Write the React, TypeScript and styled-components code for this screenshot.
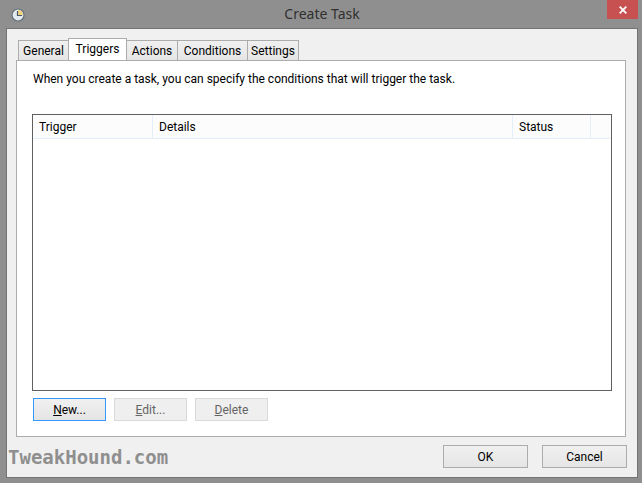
import React, { useState } from "react";
import styled, { createGlobalStyle, css } from "styled-components";

const GlobalStyle = createGlobalStyle`
  * { box-sizing: border-box; }
  body {
    margin: 0;
    background: #8f8f8f;
    color: #000;
    font: 12px/16px Roboto, "Noto Sans", sans-serif;
  }
  button { font: inherit; color: inherit; padding: 0; margin: 0; }
`;

const Frame = styled.div`
  display: flex;
  flex-direction: column;
  min-height: 100vh;
  padding: 0 4px 5px 6px;
  background: #8f8f8f;
`;

const TitleBar = styled.header`
  display: grid;
  grid-template-columns: 31px 1fr 31px;
  align-items: start;
  height: 28px;
`;

const AppIcon = styled.svg`
  width: 14px;
  height: 14px;
  margin: 8px 0 0 5px;
`;

const Title = styled.h1`
  margin: 4px 0 0;
  color: #303030;
  font-family: "Noto Sans", sans-serif;
  font-size: 14px;
  line-height: 20px;
  font-weight: 400;
  text-align: center;
`;

const CloseButton = styled.button`
  display: flex;
  align-items: center;
  justify-content: center;
  height: 19px;
  border: 0;
  background: #c75050;
`;

const Client = styled.main`
  flex: 1;
  display: flex;
  flex-direction: column;
  padding: 9px 11px 8px 9px;
  border: 1px solid #737373;
  background: #f0f0f0;
`;

const TabList = styled.div`
  display: flex;
  align-items: flex-end;
  padding-left: 2px;
  height: 23px;
  margin-bottom: -1px;
`;

const Tab = styled.button<{ $active: boolean; $width: number }>`
  width: ${(p) => p.$width}px;
  height: 21px;
  margin-right: -1px;
  border: 1px solid #acacac;
  background: linear-gradient(#f0f0f0, #e5e5e5);
  white-space: nowrap;
  ${(p) =>
    p.$active &&
    css`
      height: 23px;
      padding-bottom: 2px;
      border-bottom-color: #fff;
      background: #fff;
    `}
`;

const Panel = styled.section`
  flex: 1;
  display: flex;
  flex-direction: column;
  padding: 10px 13px 15px 15px;
  border: 1px solid #acacac;
  background: #fff;
`;

const Hint = styled.p`
  margin: 0 0 27px 1px;
`;

const ListBox = styled.div`
  flex: 1;
  border: 1px solid #606060;
`;

const ListTable = styled.table`
  width: 100%;
  table-layout: fixed;
  border-collapse: separate;
  border-spacing: 0;
`;

const HeaderCell = styled.th<{ $width?: number }>`
  width: ${(p) => (p.$width ? `${p.$width}px` : "auto")};
  height: 24px;
  padding: 0 6px;
  border-right: 1px solid #e5eef8;
  border-bottom: 1px solid #e5eef8;
  background: #fcfcfc;
  font-weight: 400;
  text-align: left;
  &:last-child { border-right: 0; }
`;

const ListActions = styled.div`
  display: flex;
  gap: 8px;
  margin: 7px 0 0 1px;
`;

const PushButton = styled.button<{ $focused?: boolean; $wide?: boolean }>`
  width: ${(p) => (p.$wide ? 85 : 73)}px;
  height: 23px;
  border: 1px solid ${(p) => (p.$focused ? "#3399ff" : "#acacac")};
  background: linear-gradient(#f0f0f0, #e5e5e5);
  &:disabled {
    border-color: #d9d9d9;
    background: #efefef;
    color: #646464;
  }
`;

const Mnemonic = styled.u`
  text-underline-offset: 1px;
`;

const Footer = styled.footer`
  display: flex;
  justify-content: space-between;
  align-items: flex-start;
  margin: 8px -1px 0 -8px;
`;

const Watermark = styled.span`
  margin-top: 1px;
  color: #8f8f8f;
  font: 700 19px/23px "DejaVu Sans Mono", monospace;
`;

const DialogActions = styled.div`
  display: flex;
  gap: 14px;
`;

const tabs = [
  { name: "General", width: 51 },
  { name: "Triggers", width: 59 },
  { name: "Actions", width: 52 },
  { name: "Conditions", width: 71 },
  { name: "Settings", width: 52 },
];

export default function App() {
  const [active, setActive] = useState("Triggers");
  return (
    <>
      <GlobalStyle />
      <Frame>
        <TitleBar>
          <AppIcon viewBox="0 0 14 14" aria-hidden="true">
            <circle cx="7" cy="7" r="6" fill="#e2eaf0" stroke="#66737c" strokeWidth="1.2" />
            <path d="M7 7V2a5 5 0 0 1 5 5Z" fill="#f3d27e" />
            <path d="M6.5 3v4.5H11" fill="none" stroke="#43586a" strokeWidth="1.2" />
          </AppIcon>
          <Title>Create Task</Title>
          <CloseButton aria-label="Close">
            <svg width="8" height="8" viewBox="0 0 8 8" aria-hidden="true">
              <path d="M0.7 0.7L7.3 7.3M7.3 0.7L0.7 7.3" stroke="#fff" strokeWidth="1.8" />
            </svg>
          </CloseButton>
        </TitleBar>
        <Client>
          <TabList role="tablist">
            {tabs.map((t) => (
              <Tab
                key={t.name}
                role="tab"
                aria-selected={t.name === active}
                $active={t.name === active}
                $width={t.width}
                onClick={() => setActive(t.name)}
              >
                {t.name}
              </Tab>
            ))}
          </TabList>
          <Panel role="tabpanel" aria-label={active}>
            <Hint>When you create a task, you can specify the conditions that will trigger the task.</Hint>
            <ListBox>
              <ListTable>
                <thead>
                  <tr>
                    <HeaderCell $width={120}>Trigger</HeaderCell>
                    <HeaderCell>Details</HeaderCell>
                    <HeaderCell $width={78}>Status</HeaderCell>
                    <HeaderCell $width={20} aria-hidden="true" />
                  </tr>
                </thead>
              </ListTable>
            </ListBox>
            <ListActions>
              <PushButton $focused><Mnemonic>N</Mnemonic>ew...</PushButton>
              <PushButton disabled><Mnemonic>E</Mnemonic>dit...</PushButton>
              <PushButton disabled><Mnemonic>D</Mnemonic>elete</PushButton>
            </ListActions>
          </Panel>
          <Footer>
            <Watermark>TweakHound.com</Watermark>
            <DialogActions>
              <PushButton $wide>OK</PushButton>
              <PushButton $wide>Cancel</PushButton>
            </DialogActions>
          </Footer>
        </Client>
      </Frame>
    </>
  );
}
